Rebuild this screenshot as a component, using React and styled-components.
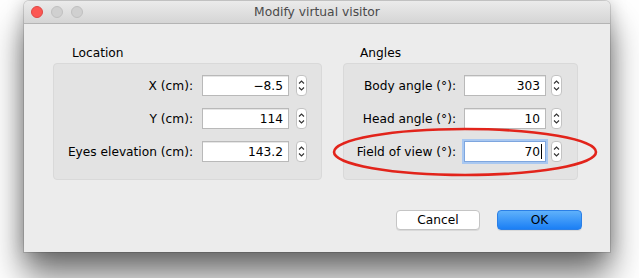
import styled, { createGlobalStyle } from 'styled-components'

const Global = createGlobalStyle`
  html, body {
    margin: 0;
    padding: 0;
    background: #ffffff;
    width: 639px;
    height: 278px;
    overflow: hidden;
  }
  body {
    font-family: "DejaVu Sans", "Liberation Sans", Arial, sans-serif;
  }
`

const Stage = styled.div`
  width: 639px;
  height: 278px;
  padding: 1px 0 0 24px;
  box-sizing: border-box;
`

const Window = styled.div`
  position: relative;
  width: 586px;
  height: 251px;
  background: #ececec;
  border-radius: 5px 5px 0 0;
  box-shadow: 0 24px 34px rgba(0, 0, 0, 0.55), 0 0 18px rgba(0, 0, 0, 0.22), 0 0 0 1px rgba(0, 0, 0, 0.12);
  display: flex;
  flex-direction: column;
`

const TitleBar = styled.div`
  height: 22px;
  flex: none;
  background: linear-gradient(#ebebeb, #d5d5d5);
  border-bottom: 1px solid #b4b4b4;
  border-radius: 5px 5px 0 0;
  display: flex;
  align-items: center;
  position: relative;
  padding-left: 7px;
  gap: 8px;
`

const Light = styled.span`
  width: 12px;
  height: 12px;
  border-radius: 50%;
  background: ${p => (p.$red ? '#fc5753' : '#d0d0d0')};
  border: 0.5px solid ${p => (p.$red ? '#df4744' : '#c0c0c0')};
  box-sizing: border-box;
`

const Title = styled.div`
  position: absolute;
  left: 0;
  right: 0;
  text-align: center;
  font-size: 12.3px;
  color: #4a4a4a;
  pointer-events: none;
`

const Content = styled.div`
  display: flex;
  padding: 21px 0 0 29px;
  gap: 21px;
`

const Group = styled.div`
  display: flex;
  flex-direction: column;
  width: ${p => p.$w}px;
`

const GroupTitle = styled.div`
  font-size: 12.2px;
  color: #000;
  padding-left: ${p => p.$indent}px;
  height: 18px;
  line-height: 16px;
`

const Box = styled.div`
  background: #e3e3e3;
  border: 1px solid #d9d9d9;
  border-radius: 4px;
  height: 117px;
  box-sizing: border-box;
  padding: 11px ${p => p.$pr}px 0 0;
  display: flex;
  flex-direction: column;
  gap: 12px;
`

const Row = styled.div`
  display: flex;
  align-items: center;
  justify-content: flex-end;
  height: 21px;
`

const Label = styled.div`
  font-size: 12.2px;
  color: #000;
  margin-right: ${p => p.$gap}px;
  white-space: nowrap;
`

const Field = styled.div`
  width: ${p => p.$w}px;
  height: 21px;
  box-sizing: border-box;
  background: #fff;
  border: 1px solid ${p => (p.$focus ? '#7ea6de' : '#b9b9b9')};
  box-shadow: ${p => (p.$focus ? '0 0 0 2px #a9c8f1' : 'inset 0 1px 0 #e6e6e6')};
  font-size: 12.2px;
  color: #000;
  display: flex;
  align-items: center;
  justify-content: flex-end;
  padding-right: ${p => (p.$focus ? 3 : 5)}px;
`

const Caret = styled.span`
  width: 1px;
  height: 15px;
  background: #000;
  margin-left: 1px;
`

const StepperBox = styled.div`
  width: 11px;
  height: 21px;
  margin-left: ${p => p.$gap}px;
  box-sizing: border-box;
  background: #fff;
  border: 1px solid #c3c3c3;
  border-radius: 4px;
  display: flex;
  align-items: center;
  justify-content: center;
`

const Footer = styled.div`
  display: flex;
  justify-content: flex-end;
  gap: 17px;
  padding: 30px 28px 0 0;
`

const Button = styled.div`
  width: ${p => p.$w}px;
  height: 20px;
  box-sizing: border-box;
  border-radius: 4px;
  font-size: 12.2px;
  display: flex;
  align-items: center;
  justify-content: center;
  color: #000;
  background: ${p => (p.$primary ? 'linear-gradient(#5fb1fb, #1b7ff5)' : '#fff')};
  border: 1px solid ${p => (p.$primary ? '#2b7fe6' : '#c5c5c5')};
  box-shadow: 0 1px 0 rgba(0, 0, 0, 0.08);
`

const Ring = styled.svg`
  position: absolute;
  left: 306px;
  top: 124px;
  pointer-events: none;
`

const Stepper = ({ gap }) => (
  <StepperBox $gap={gap}>
    <svg width="7" height="15" viewBox="0 0 7 15">
      <path d="M1 5.5 L3.5 3 L6 5.5" fill="none" stroke="#333" strokeWidth="1.1" />
      <path d="M1 9.5 L3.5 12 L6 9.5" fill="none" stroke="#333" strokeWidth="1.1" />
    </svg>
  </StepperBox>
)

const location = [
  { label: 'X (cm):', value: '−8.5' },
  { label: 'Y (cm):', value: '114' },
  { label: 'Eyes elevation (cm):', value: '143.2' },
]

const angles = [
  { label: 'Body angle (°):', value: '303' },
  { label: 'Head angle (°):', value: '10' },
  { label: 'Field of view (°):', value: '70', focus: true },
]

const App = () => {
  return (
    <Stage>
      <Global />
      <Window>
        <TitleBar>
          <Light $red />
          <Light />
          <Light />
          <Title>Modify virtual visitor</Title>
        </TitleBar>
        <Content>
          <Group $w={269}>
            <GroupTitle $indent={19}>Location</GroupTitle>
            <Box $pr={14}>
              {location.map(r => (
                <Row key={r.label}>
                  <Label $gap={9}>{r.label}</Label>
                  <Field $w={87}>{r.value}</Field>
                  <Stepper gap={7} />
                </Row>
              ))}
            </Box>
          </Group>
          <Group $w={235}>
            <GroupTitle $indent={17}>Angles</GroupTitle>
            <Box $pr={15}>
              {angles.map(r => (
                <Row key={r.label}>
                  <Label $gap={8}>{r.label}</Label>
                  <Field $w={82} $focus={r.focus}>
                    {r.value}
                    {r.focus && <Caret />}
                  </Field>
                  <Stepper gap={5} />
                </Row>
              ))}
            </Box>
          </Group>
        </Content>
        <Footer>
          <Button $w={84}>Cancel</Button>
          <Button $w={85} $primary>OK</Button>
        </Footer>
        <Ring width="270" height="54" viewBox="0 0 270 54">
          <ellipse cx="135" cy="27" rx="131" ry="23" fill="none" stroke="#e2241b" strokeWidth="2.6" />
        </Ring>
      </Window>
    </Stage>
  )
}

export default App
